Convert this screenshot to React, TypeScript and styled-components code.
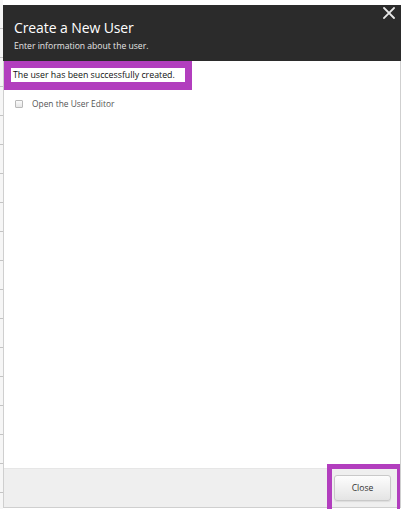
import React from "react";
import styled, { createGlobalStyle } from "styled-components";

const GlobalStyle = createGlobalStyle`
  html, body {
    margin: 0;
    padding: 0;
    background: #ffffff;
  }
  body {
    font-family: "Open Sans", "Noto Sans", sans-serif;
  }
`;

const HIGHLIGHT = "#b23ebe";

const Page = styled.div`
  width: 404px;
  height: 509px;
  box-sizing: border-box;
  padding: 5px 3px 2px 3px;
  position: relative;
  overflow: hidden;
  background: #ffffff;
`;

// faint edge of the page that sits behind the dialog
const Backdrop = styled.div`
  position: absolute;
  left: 0;
  top: 0;
  width: 3px;
  height: 100%;
  background: repeating-linear-gradient(
    to bottom,
    #f6f6f6 0px,
    #f6f6f6 28px,
    #c4c4c4 28px,
    #c4c4c4 29px
  );
`;

const Dialog = styled.div`
  position: relative;
  height: 100%;
  display: flex;
  flex-direction: column;
  border: 1px solid #cfcfcf;
  border-top: none;
  background: #ffffff;
`;

const Header = styled.div`
  height: 56px;
  box-sizing: border-box;
  background: #2b2b2b;
  padding: 13px 11px 0 11px;
  color: #ffffff;
  margin: 0 -1px;
`;

const Title = styled.h1`
  margin: 0;
  font-size: 14px;
  font-weight: 400;
  line-height: 20px;
  letter-spacing: -0.1px;
`;

const Subtitle = styled.p`
  margin: 2px 0 0 0;
  font-size: 8.6px;
  line-height: 12px;
  color: #e6e6e6;
`;

const CloseX = styled.button`
  position: absolute;
  top: 1px;
  right: 4px;
  width: 14px;
  height: 14px;
  padding: 0;
  border: none;
  background: transparent;
  display: flex;
  align-items: center;
  justify-content: center;
`;

const Body = styled.div`
  flex: 1;
  display: flex;
  flex-direction: column;
  align-items: flex-start;
`;

const Message = styled.div`
  border: 7px solid ${HIGHLIGHT};
  border-bottom-width: 8px;
  background: #ffffff;
  padding: 0 4px 0 2px;
  font-size: 8.8px;
  line-height: 14px;
  color: #111111;
  width: 168px;
  box-sizing: content-box;
  white-space: nowrap;
`;

const CheckRow = styled.label`
  display: flex;
  align-items: center;
  gap: 9px;
  margin: 8px 0 0 11px;
  font-size: 8.4px;
  color: #555555;
  line-height: 12px;
`;

const Box = styled.span`
  width: 6px;
  height: 6px;
  border: 1px solid #b9b9b9;
  border-radius: 1px;
  background: linear-gradient(#fbfbfb, #e6e6e6);
`;

const Footer = styled.div`
  height: 39px;
  box-sizing: border-box;
  background: #efefef;
  border-top: 1px solid #e6e6e6;
  display: flex;
  justify-content: flex-end;
  align-items: flex-start;
  padding: 6px 9px 0 0;
  position: relative;
`;

const Highlight = styled.div`
  position: absolute;
  right: 0;
  top: -5px;
  width: 65px;
  height: 44px;
  border: 5px solid ${HIGHLIGHT};
  border-right-width: 3px;
  border-bottom: none;
  pointer-events: none;
`;

const Button = styled.button`
  width: 57px;
  height: 26px;
  border: 1px solid #c9c9c9;
  border-radius: 3px;
  background: linear-gradient(#fdfdfd, #e4e4e4);
  box-shadow: 0 1px 1px rgba(0, 0, 0, 0.08);
  font-family: "Open Sans", "Noto Sans", sans-serif;
  font-size: 8.6px;
  color: #333333;
  padding: 0;
`;

export default function App() {
  return (
    <>
      <GlobalStyle />
      <Page>
        <Backdrop />
        <Dialog>
          <Header>
            <Title>Create a New User</Title>
            <Subtitle>Enter information about the user.</Subtitle>
          </Header>
          <CloseX aria-label="Close">
            <svg width="12" height="12" viewBox="0 0 12 12">
              <path
                d="M1 1 L11 11 M11 1 L1 11"
                stroke="#e8e8e8"
                strokeWidth="1.8"
                strokeLinecap="square"
              />
            </svg>
          </CloseX>
          <Body>
            <Message>The user has been successfully created.</Message>
            <CheckRow>
              <Box />
              Open the User Editor
            </CheckRow>
          </Body>
          <Footer>
            <Button>Close</Button>
            <Highlight />
          </Footer>
        </Dialog>
      </Page>
    </>
  );
}
